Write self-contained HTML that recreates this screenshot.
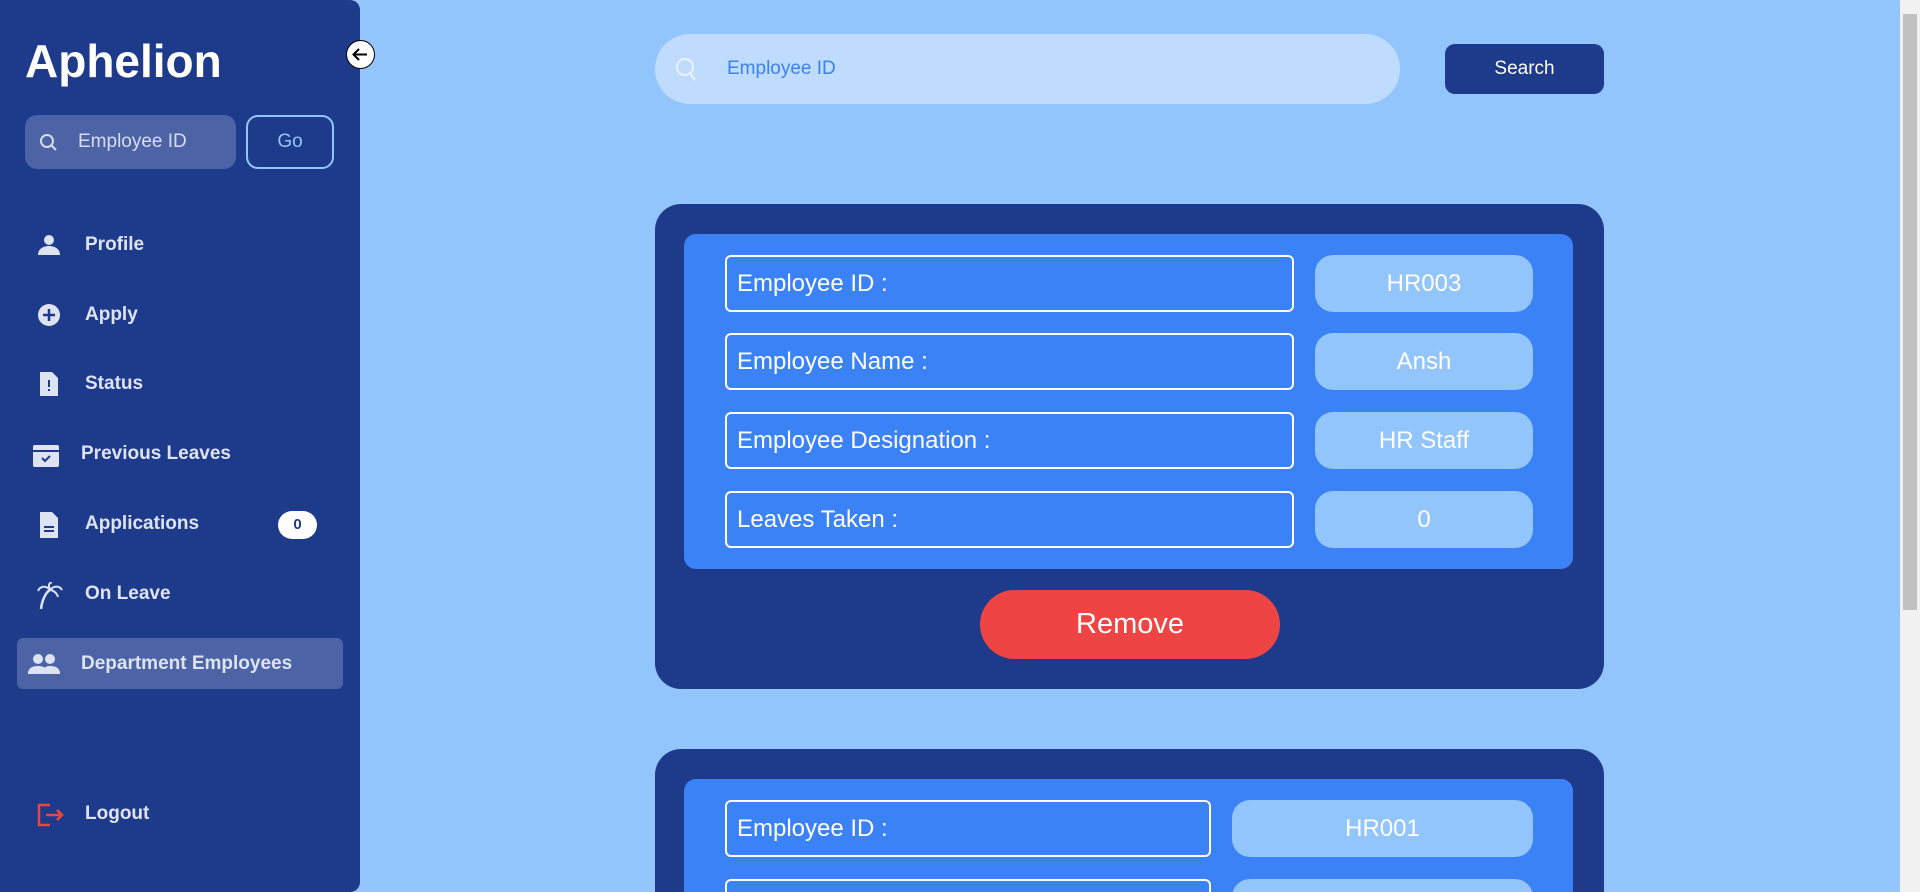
<!DOCTYPE html>
<html><head><meta charset="utf-8"><style>
*{box-sizing:border-box;margin:0;padding:0}
html,body{width:1920px;height:892px;overflow:hidden}
body{background:#93c5fd;font-family:"Liberation Sans",sans-serif}
#w{position:relative;width:1920px;height:892px;overflow:hidden;background:#93c5fd}
.sb{position:absolute;left:0;top:0;width:360px;height:892px;background:#1e3a8a;border-radius:0 10px 10px 0}
.logo{position:absolute;left:25px;top:34px;font-size:46px;font-weight:bold;color:#fff}
.ss{position:absolute;left:25px;top:115px;width:211px;height:54px;border-radius:12px;background:#4c64a5;color:#d6dcf0;font-size:19px;line-height:54px;padding-left:53px}
.go{position:absolute;left:246px;top:115px;width:88px;height:54px;border:2px solid #93c5fd;border-radius:12px;color:#93c5fd;font-size:19px;text-align:center;line-height:50px}
.mi{position:absolute;left:0;width:360px;height:40px;color:#dde3f3;font-size:19px;font-weight:bold;line-height:40px}
.mi span{position:absolute;left:85px}
.mi svg{position:absolute;left:36px;top:8px}
.hl{position:absolute;left:17px;top:638px;width:326px;height:51px;background:#4c64a5;border-radius:6px}
.badge{position:absolute;left:278px;top:511px;width:39px;height:28px;border-radius:14px;background:#fff;color:#1e3a8a;font-size:15px;font-weight:bold;text-align:center;line-height:28px}
.arrow{position:absolute;left:346px;top:40px;width:29px;height:29px;border-radius:50%;background:#fff;border:1px solid #000}
.ms{position:absolute;left:655px;top:34px;width:745px;height:70px;border-radius:35px;background:#bfdbfe;color:#3b82f6;font-size:19px;line-height:70px;padding-left:72px}
.sbtn{position:absolute;left:1445px;top:44px;width:159px;height:50px;border-radius:10px;background:#1e3a8a;color:#fff;font-size:19px;text-align:center;line-height:50px}
.card{position:absolute;left:655px;width:949px;background:#1e3a8a;border-radius:26px;overflow:hidden}
.inner{position:absolute;left:29px;width:889px;background:#3b82f6;border-radius:12px}
.lab{position:absolute;height:57px;border:2px solid #fff;border-radius:6px;color:#fff;font-size:24px;line-height:53px;padding-left:10px}
.val{position:absolute;height:57px;border-radius:18px;background:#93c5fd;color:#fff;font-size:24px;line-height:57px;text-align:center}
.rm{position:absolute;left:325px;top:386px;width:300px;height:69px;border-radius:35px;background:#ef4444;color:#fff;font-size:29px;text-align:center;line-height:69px}
.scr{position:absolute;left:1900px;top:0;width:20px;height:892px;background:#f1f1f1}
.thumb{position:absolute;left:1903px;top:14px;width:14px;height:596px;background:#c1c1c1}
</style></head><body><div id="w">
<div class="sb">
<div class="logo">Aphelion</div>
<div class="ss"><svg style="position:absolute;left:14px;top:18px" width="20" height="20" viewBox="0 0 20 20"><circle cx="8" cy="8" r="6" fill="none" stroke="#d6dcf0" stroke-width="2"/><path d="M12.5 12.5L17 17" stroke="#d6dcf0" stroke-width="2"/></svg>Employee ID</div>
<div class="go">Go</div>
<div class="hl"></div>
<div class="mi" style="top:225px"><svg width="26" height="24" viewBox="0 0 26 24"><circle cx="13" cy="7" r="5" fill="#dde3f3"/><path d="M2 22c0-6 5-9 11-9s11 3 11 9z" fill="#dde3f3"/></svg><span>Profile</span></div>
<div class="mi" style="top:295px"><svg width="26" height="24" viewBox="0 0 26 24"><circle cx="13" cy="12" r="11" fill="#dde3f3"/><path d="M13 6v12M7 12h12" stroke="#1e3a8a" stroke-width="2.5"/></svg><span>Apply</span></div>
<div class="mi" style="top:364px"><svg width="26" height="24" viewBox="0 0 26 24"><path d="M4 0h12l6 6v18H4z" fill="#dde3f3"/><path d="M13 8v7M13 17v2" stroke="#1e3a8a" stroke-width="2"/></svg><span>Status</span></div>
<div class="mi" style="top:434px"><svg width="30" height="26" viewBox="0 0 30 26" style="left:32px"><rect x="1" y="3" width="26" height="22" rx="2" fill="#dde3f3"/><rect x="1" y="8" width="26" height="2" fill="#1e3a8a"/><path d="M10 16l3 3 5-5" stroke="#1e3a8a" stroke-width="2" fill="none"/></svg><span style="left:81px">Previous Leaves</span></div>
<div class="mi" style="top:504px"><svg width="26" height="26" viewBox="0 0 26 26"><path d="M4 0h12l6 6v20H4z" fill="#dde3f3"/><path d="M8 15h10M8 19h10" stroke="#1e3a8a" stroke-width="2"/></svg><span>Applications</span></div>
<div class="badge">0</div>
<div class="mi" style="top:574px"><svg width="28" height="28" viewBox="0 0 28 28"><path d="M14 8C10 10 6 18 5 27" stroke="#dde3f3" stroke-width="2.5" fill="none"/><path d="M14 8C10 3 4 4 2 9M14 8c4-5 10-4 12 0M14 8c-2-5-1-7 2-8M14 8c3 0 7 3 8 7" stroke="#dde3f3" stroke-width="2" fill="none"/></svg><span>On Leave</span></div>
<div class="mi" style="top:644px"><svg width="32" height="24" viewBox="0 0 32 24" style="left:28px"><circle cx="10" cy="7" r="5" fill="#dde3f3"/><circle cx="22" cy="7" r="5" fill="#dde3f3"/><path d="M0 22c0-6 4-8 10-8s9 2 10 8zM14 22c0-4 2-8 8-8s10 2 10 8z" fill="#dde3f3"/></svg><span style="left:81px">Department Employees</span></div>
<div class="mi" style="top:794px"><svg width="30" height="26" viewBox="0 0 30 26"><path d="M14 3H3v20h11" stroke="#ef4444" stroke-width="2.5" fill="none"/><path d="M10 13h16M21 8l5 5-5 5" stroke="#ef4444" stroke-width="2.5" fill="none"/></svg><span>Logout</span></div>
</div>
<div class="arrow"><svg width="27" height="27" viewBox="0 0 27 27"><path d="M20 13.5H7M12 8l-5.5 5.5L12 19" stroke="#000" stroke-width="2" fill="none"/></svg></div>
<div class="ms"><svg style="position:absolute;left:20px;top:23px" width="24" height="26" viewBox="0 0 24 26"><circle cx="10" cy="10" r="8" fill="none" stroke="#eaf3ff" stroke-width="2"/><path d="M15 16l5 7" stroke="#eaf3ff" stroke-width="2"/></svg>Employee ID</div>
<div class="sbtn">Search</div>
<div class="card" style="top:204px;height:485px">
<div class="inner" style="top:30px;height:335px"></div>
<div class="lab" style="left:70px;top:51px;width:569px">Employee ID :</div><div class="val" style="left:660px;top:51px;width:218px">HR003</div>
<div class="lab" style="left:70px;top:129px;width:569px">Employee Name :</div><div class="val" style="left:660px;top:129px;width:218px">Ansh</div>
<div class="lab" style="left:70px;top:208px;width:569px">Employee Designation :</div><div class="val" style="left:660px;top:208px;width:218px">HR Staff</div>
<div class="lab" style="left:70px;top:287px;width:569px">Leaves Taken :</div><div class="val" style="left:660px;top:287px;width:218px">0</div>
<div class="rm">Remove</div>
</div>
<div class="card" style="top:749px;height:143px;border-radius:26px 26px 0 0">
<div class="inner" style="top:30px;height:200px"></div>
<div class="lab" style="left:70px;top:51px;width:486px">Employee ID :</div><div class="val" style="left:577px;top:51px;width:301px">HR001</div>
<div class="lab" style="left:70px;top:130px;width:486px"></div><div class="val" style="left:577px;top:130px;width:301px"></div>
</div>
<div class="scr"></div><div class="thumb"></div>
</div></body></html>
